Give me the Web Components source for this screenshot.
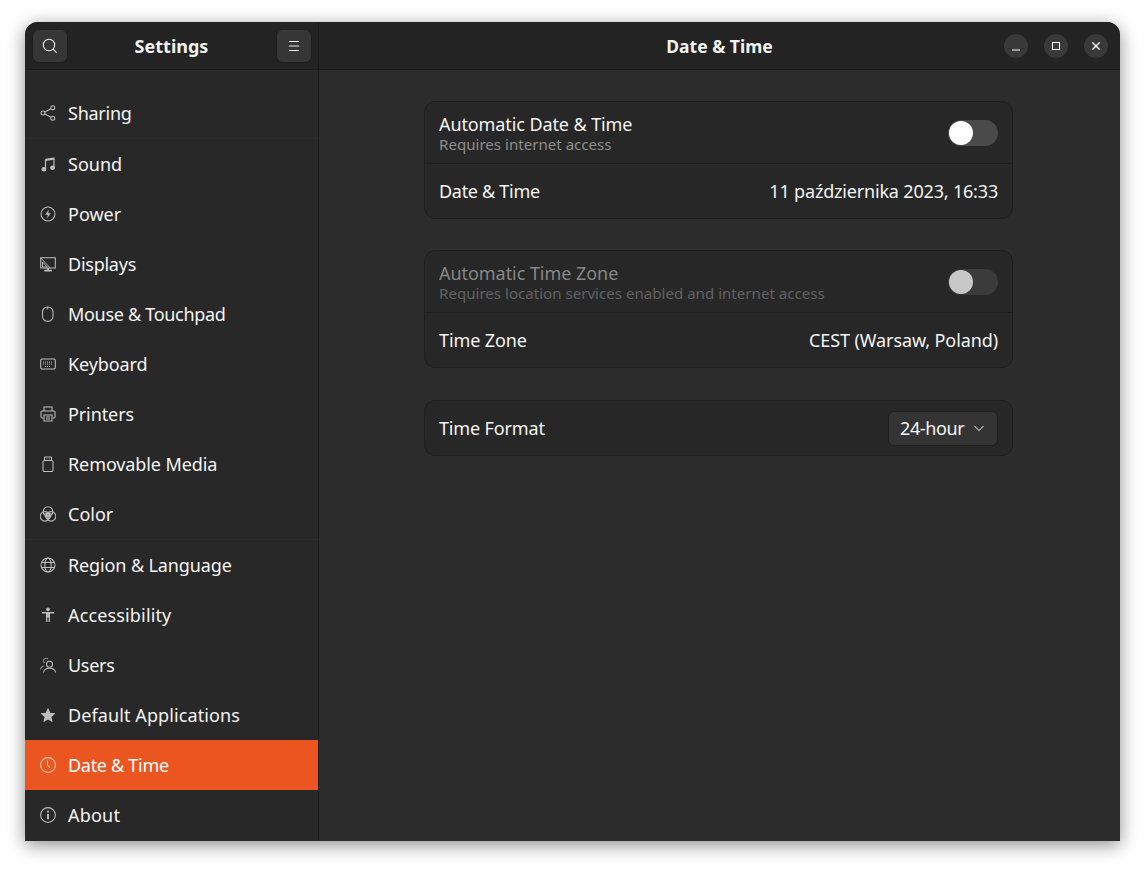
<!DOCTYPE html>
<html lang="en">
<head>
<meta charset="utf-8">
<title>Settings</title>
<style>
    html, body { margin: 0; height: 100%; background: #fff; }
    body { padding: 22px 25px 28px; box-sizing: border-box; font: 18px "Noto Sans", sans-serif; color: #fff; overflow: hidden; }
</style>
</head>
<body>
<settings-window>
    <header-bar slot="left-head" title-text="Settings" style="--title-size:18px">
        <icon-button slot="start" icon="search"></icon-button>
        <icon-button slot="end" icon="menu"></icon-button>
    </header-bar>
    <header-bar slot="right-head" title-text="Date &amp; Time" style="padding-right:12px">
        <span slot="start"></span>
        <span slot="end" style="display:flex;gap:16px">
            <window-button icon="min"></window-button>
            <window-button icon="max"></window-button>
            <window-button icon="close"></window-button>
        </span>
    </header-bar>
    <side-row slot="side" icon="share" separated style="letter-spacing:-.25px">Sharing</side-row>
    <side-row slot="side" icon="sound">Sound</side-row>
    <side-row slot="side" icon="power">Power</side-row>
    <side-row slot="side" icon="display" style="letter-spacing:-.25px">Displays</side-row>
    <side-row slot="side" icon="mouse" style="letter-spacing:-.3px">Mouse &amp; Touchpad</side-row>
    <side-row slot="side" icon="keyboard" style="letter-spacing:-.1px">Keyboard</side-row>
    <side-row slot="side" icon="printer" style="letter-spacing:-.1px">Printers</side-row>
    <side-row slot="side" icon="usb" style="letter-spacing:-.1px">Removable Media</side-row>
    <side-row slot="side" icon="color" separated>Color</side-row>
    <side-row slot="side" icon="globe" style="letter-spacing:-.12px">Region &amp; Language</side-row>
    <side-row slot="side" icon="access" style="letter-spacing:.15px">Accessibility</side-row>
    <side-row slot="side" icon="users" style="letter-spacing:-.3px">Users</side-row>
    <side-row slot="side" icon="star" style="letter-spacing:.1px">Default Applications</side-row>
    <side-row slot="side" icon="clock" selected style="letter-spacing:-.3px">Date &amp; Time</side-row>
    <side-row slot="side" icon="info" style="letter-spacing:.2px">About</side-row>

    <pref-group>
        <pref-row label="Automatic Date &amp; Time" sub="Requires internet access" tall style="--ls:-.1px"><toggle-switch></toggle-switch></pref-row>
        <pref-row label="Date &amp; Time" line style="--ls:-.3px;--vs:-.18px">11 października 2023, 16:33</pref-row>
    </pref-group>
    <pref-group>
        <pref-row label="Automatic Time Zone" sub="Requires location services enabled and internet access" tall dim style="--ls:-.05px"><toggle-switch dim></toggle-switch></pref-row>
        <pref-row label="Time Zone" line style="--ls:-.1px;--vs:-.1px">CEST (Warsaw, Poland)</pref-row>
    </pref-group>
    <pref-group style="margin-top:1px">
        <pref-row label="Time Format" style="--ls:-.15px"><combo-button>24-hour</combo-button></pref-row>
    </pref-group>
</settings-window>

<script>
const ICONS = {
    search: '<circle cx="7" cy="7" r="5.7"/><path d="M11.2 11.2l3.6 3.6"/>',
    menu: '<path d="M3 3.5h10M3 8h10M3 12.5h10"/>',
    min: '<path d="M4 12h8"/>',
    max: '<rect x="4.5" y="4.5" width="7" height="7"/>',
    close: '<path d="M4.2 4.2l7.6 7.6M11.8 4.2l-7.6 7.6" stroke-width="1.4"/>',
    share: '<circle cx="3" cy="8" r="2"/><circle cx="12.8" cy="2.8" r="2"/><circle cx="12.8" cy="13.2" r="2"/><path d="M4.8 7l6.2-3.3M4.8 9l6.2 3.3"/>',
    sound: '<path d="M5.5 13V3.6M14 11.5V1.8" stroke-width="1.2"/><path d="M5.5 3.8L14 2.6" stroke-width="2.2"/><ellipse cx="3.9" cy="13.2" rx="1.9" ry="1.7" fill="currentColor"/><ellipse cx="12.5" cy="11.8" rx="1.9" ry="1.7" fill="currentColor"/>',
    power: '<circle cx="8" cy="8" r="7"/><path d="M9 3.5L5.2 8.8h2.6L7 12.5l3.8-5.3H8.2z" fill="currentColor" stroke="none"/>',
    display: '<path d="M.7 1.8h14.6v10.2H.7z"/><path d="M8 12v2M4.2 14.6h7.6" stroke-width="1.7"/><path d="M.7 1.8l9.5 10.2M2.5 6l4.8 5H2.5z" stroke-width=".95"/>',
    mouse: '<rect x="2.5" y=".9" width="10.5" height="14.4" rx="5"/><path d="M7.7 1v2.4"/>',
    keyboard: '<rect x=".7" y="3" width="14.6" height="10" rx="1.5"/><path d="M3 6h10M3 8h10M5 10.5h6" stroke-dasharray="1 1" stroke-width="1.1"/>',
    printer: '<path d="M4 5V1h8v4M3.5 12H2.2A1.2 1.2 0 0 1 1 10.8V6.2A1.2 1.2 0 0 1 2.2 5h11.6A1.2 1.2 0 0 1 15 6.2v4.6a1.2 1.2 0 0 1-1.2 1.2h-1.3"/><path d="M4 9h8v6H4zM6 11h4M6 13h4"/>',
    usb: '<rect x="3" y="4.5" width="10" height="11" rx="1.5"/><path d="M4.5 4.5V1h7v3.5M6.5 2.8h.8M9 2.8h.8" stroke-width="1"/>',
    color: '<circle cx="8" cy="5.5" r="4.8"/><circle cx="5" cy="10.3" r="4.8"/><circle cx="11" cy="10.3" r="4.8"/><path d="M4.2 7.2L8 5.6l3.8 1.6-.6 3.8L8 14.6 4.8 11z" fill="currentColor" stroke="none" opacity=".75"/>',
    globe: '<circle cx="8" cy="8" r="7"/><ellipse cx="8" cy="8" rx="3.2" ry="7"/><path d="M1.3 5.5h13.4M1.3 10.5h13.4"/>',
    access: '<circle cx="8" cy="2.3" r="1.9" fill="currentColor" stroke="none"/><path d="M2 5h12v1.6h-4V15H8.7v-4.6H7.3V15H6V6.6H2z" fill="currentColor" stroke="none"/>',
    users: '<circle cx="9.5" cy="7.2" r="3"/><path d="M3.5 15.5c.3-3 2.6-4.2 6-4.2s5.7 1.2 6 4.2"/><path d="M8 2.2a2.6 2.6 0 0 0-4.6 1.6c0 1 .5 1.8 1.2 2.3M.5 12.5c.2-2 1.4-3.2 3.3-3.6" opacity=".7"/>',
    star: '<path d="M8 .8l2.2 4.9 5.3.6-4 3.6 1.1 5.3L8 12.5l-4.6 2.7 1.1-5.3-4-3.6 5.3-.6z" fill="currentColor" stroke="none"/>',
    clock: '<circle cx="8" cy="8" r="7.4"/><path d="M7.5 3.5V8l2.6 2.6"/>',
    info: '<circle cx="8" cy="8" r="7.4"/><circle cx="8" cy="4.6" r="1.1" fill="currentColor" stroke="none"/><path d="M8 7v5.2" stroke-width="1.9"/>',
    chevron: '<path d="M3.5 6L8 10.5 12.5 6"/>'
};

function svgIcon(name, size) {
    return `<svg width="${size}" height="${size}" viewBox="0 0 16 16" fill="none" stroke="currentColor" stroke-width="1.05" aria-hidden="true">${ICONS[name]}</svg>`;
}

class SettingsWindow extends HTMLElement {
    constructor() {
        super();
        this.attachShadow({mode: 'open'}).innerHTML = `
            <style>
                :host {
                    display: grid; grid-template-columns: 294px 1fr; grid-template-rows: 48px 1fr;
                    height: 819px; border-radius: 13px 13px 0 0; overflow: hidden; background: #2c2c2c;
                    box-shadow: 0 4px 18px rgba(0, 0, 0, .45);
                }
                .side-head { border-right: 1px solid #1b1b1b; }
                aside { background: #282828; border-right: 1px solid #1b1b1b; padding-top: 18px; }
                main { display: flex; flex-direction: column; gap: 31px; padding: 31px 0 0 105px; }
            </style>
            <div class="side-head"><slot name="left-head"></slot></div>
            <div><slot name="right-head"></slot></div>
            <aside><slot name="side"></slot></aside>
            <main><slot></slot></main>
        `;
    }
}

class HeaderBar extends HTMLElement {
    constructor() {
        super();
        const title = this.getAttribute('title-text') || '';
        this.attachShadow({mode: 'open'}).innerHTML = `
            <style>
                :host {
                    display: flex; align-items: center; justify-content: space-between; position: relative;
                    height: 48px; box-sizing: border-box; padding: 1px 6px 0 7px; background: #232323;
                    border-bottom: 1px solid #1b1b1b;
                }
                .title {
                    position: absolute; inset: 1px 0 0 0; display: flex; align-items: center; justify-content: center;
                    font-weight: 700; font-size: var(--title-size, 17.5px); color: #f2f2f2;
                }
                ::slotted(*) { position: relative; }
            </style>
            <slot name="start"></slot>
            <div class="title">${title}</div>
            <slot name="end"></slot>
        `;
    }
}

class IconButton extends HTMLElement {
    constructor() {
        super();
        this.attachShadow({mode: 'open'}).innerHTML = `
            <style>
                :host {
                    display: flex; align-items: center; justify-content: center; width: 34px; height: 32px;
                    border: 1px solid #1f1f1f; border-radius: 7px; background: #363636; color: #eee;
                }
            </style>
            ${svgIcon(this.getAttribute('icon'), 16)}
        `;
    }
}

class WindowButton extends HTMLElement {
    constructor() {
        super();
        this.attachShadow({mode: 'open'}).innerHTML = `
            <style>
                :host {
                    display: flex; align-items: center; justify-content: center; width: 24px; height: 24px;
                    border-radius: 50%; background: #393939; color: #fff;
                }
            </style>
            ${svgIcon(this.getAttribute('icon'), 16)}
        `;
    }
}

class SideRow extends HTMLElement {
    constructor() {
        super();
        this.attachShadow({mode: 'open'}).innerHTML = `
            <style>
                :host {
                    display: flex; align-items: center; gap: 12px; height: 50px; box-sizing: border-box;
                    padding-left: 15px; color: #f4f4f4;
                }
                :host([separated]) { height: 51px; border-bottom: 1px solid #2c2c2c; }
                :host([selected]) { background: #eb5620; color: #fff; }
                svg { color: #bdbdbd; flex: none; }
                :host([selected]) svg { color: #f8c9b5; }
            </style>
            ${svgIcon(this.getAttribute('icon'), 16)}
            <slot></slot>
        `;
    }
}

class PrefGroup extends HTMLElement {
    constructor() {
        super();
        this.attachShadow({mode: 'open'}).innerHTML = `
            <style>
                :host {
                    display: block; width: 589px; box-sizing: border-box; background: #272727;
                    border: 1px solid #1e1e1e; border-radius: 11px; overflow: hidden;
                }
            </style>
            <slot></slot>
        `;
    }
}

class PrefRow extends HTMLElement {
    constructor() {
        super();
        const sub = this.getAttribute('sub');
        this.attachShadow({mode: 'open'}).innerHTML = `
            <style>
                :host {
                    display: flex; align-items: center; justify-content: space-between; height: 54px;
                    box-sizing: border-box; padding: 0 14px; color: #f4f4f4; letter-spacing: var(--vs, 0);
                }
                :host([tall]) { height: 61px; padding-top: 2px; }
                :host([tall]) ::slotted(toggle-switch) { margin-top: -2px; }
                :host([line]) { height: 55px; border-top: 1px solid #1e1e1e; }
                .label { line-height: 20px; letter-spacing: var(--ls, 0); white-space: nowrap; }
                .sub { font-size: 15.1px; line-height: 18px; margin-top: 1px; color: #8e8e8e; letter-spacing: 0; white-space: nowrap; }
                :host([dim]) .label { color: #868686; }
                :host([dim]) .sub { color: #626262; }
            </style>
            <div>
                <div class="label">${this.getAttribute('label')}</div>
                ${sub ? `<div class="sub">${sub}</div>` : ''}
            </div>
            <slot></slot>
        `;
    }
}

class ToggleSwitch extends HTMLElement {
    constructor() {
        super();
        this.attachShadow({mode: 'open'}).innerHTML = `
            <style>
                :host {
                    display: block; width: 50px; height: 26px; box-sizing: border-box; padding: 1px;
                    border-radius: 13px; background: #4a4a4a;
                }
                :host([dim]) { background: #3b3b3b; }
                .knob { width: 24px; height: 24px; border-radius: 50%; background: #fff; }
                :host([dim]) .knob { background: #c8c8c8; }
            </style>
            <div class="knob"></div>
        `;
    }
}

class ComboButton extends HTMLElement {
    constructor() {
        super();
        this.attachShadow({mode: 'open'}).innerHTML = `
            <style>
                :host {
                    display: flex; align-items: center; justify-content: space-between; width: 110px; height: 35px; box-sizing: border-box;
                    padding: 0 10px 0 11px; background: #343434; border: 1px solid #1f1f1f; border-radius: 6px; color: #f4f4f4;
                    white-space: nowrap; letter-spacing: -.4px;
                }
                svg { color: #cfcfcf; flex: none; }
            </style>
            <slot></slot>
            ${svgIcon('chevron', 16)}
        `;
    }
}

customElements.define('settings-window', SettingsWindow);
customElements.define('header-bar', HeaderBar);
customElements.define('icon-button', IconButton);
customElements.define('window-button', WindowButton);
customElements.define('side-row', SideRow);
customElements.define('pref-group', PrefGroup);
customElements.define('pref-row', PrefRow);
customElements.define('toggle-switch', ToggleSwitch);
customElements.define('combo-button', ComboButton);
</script>
</body>
</html>
